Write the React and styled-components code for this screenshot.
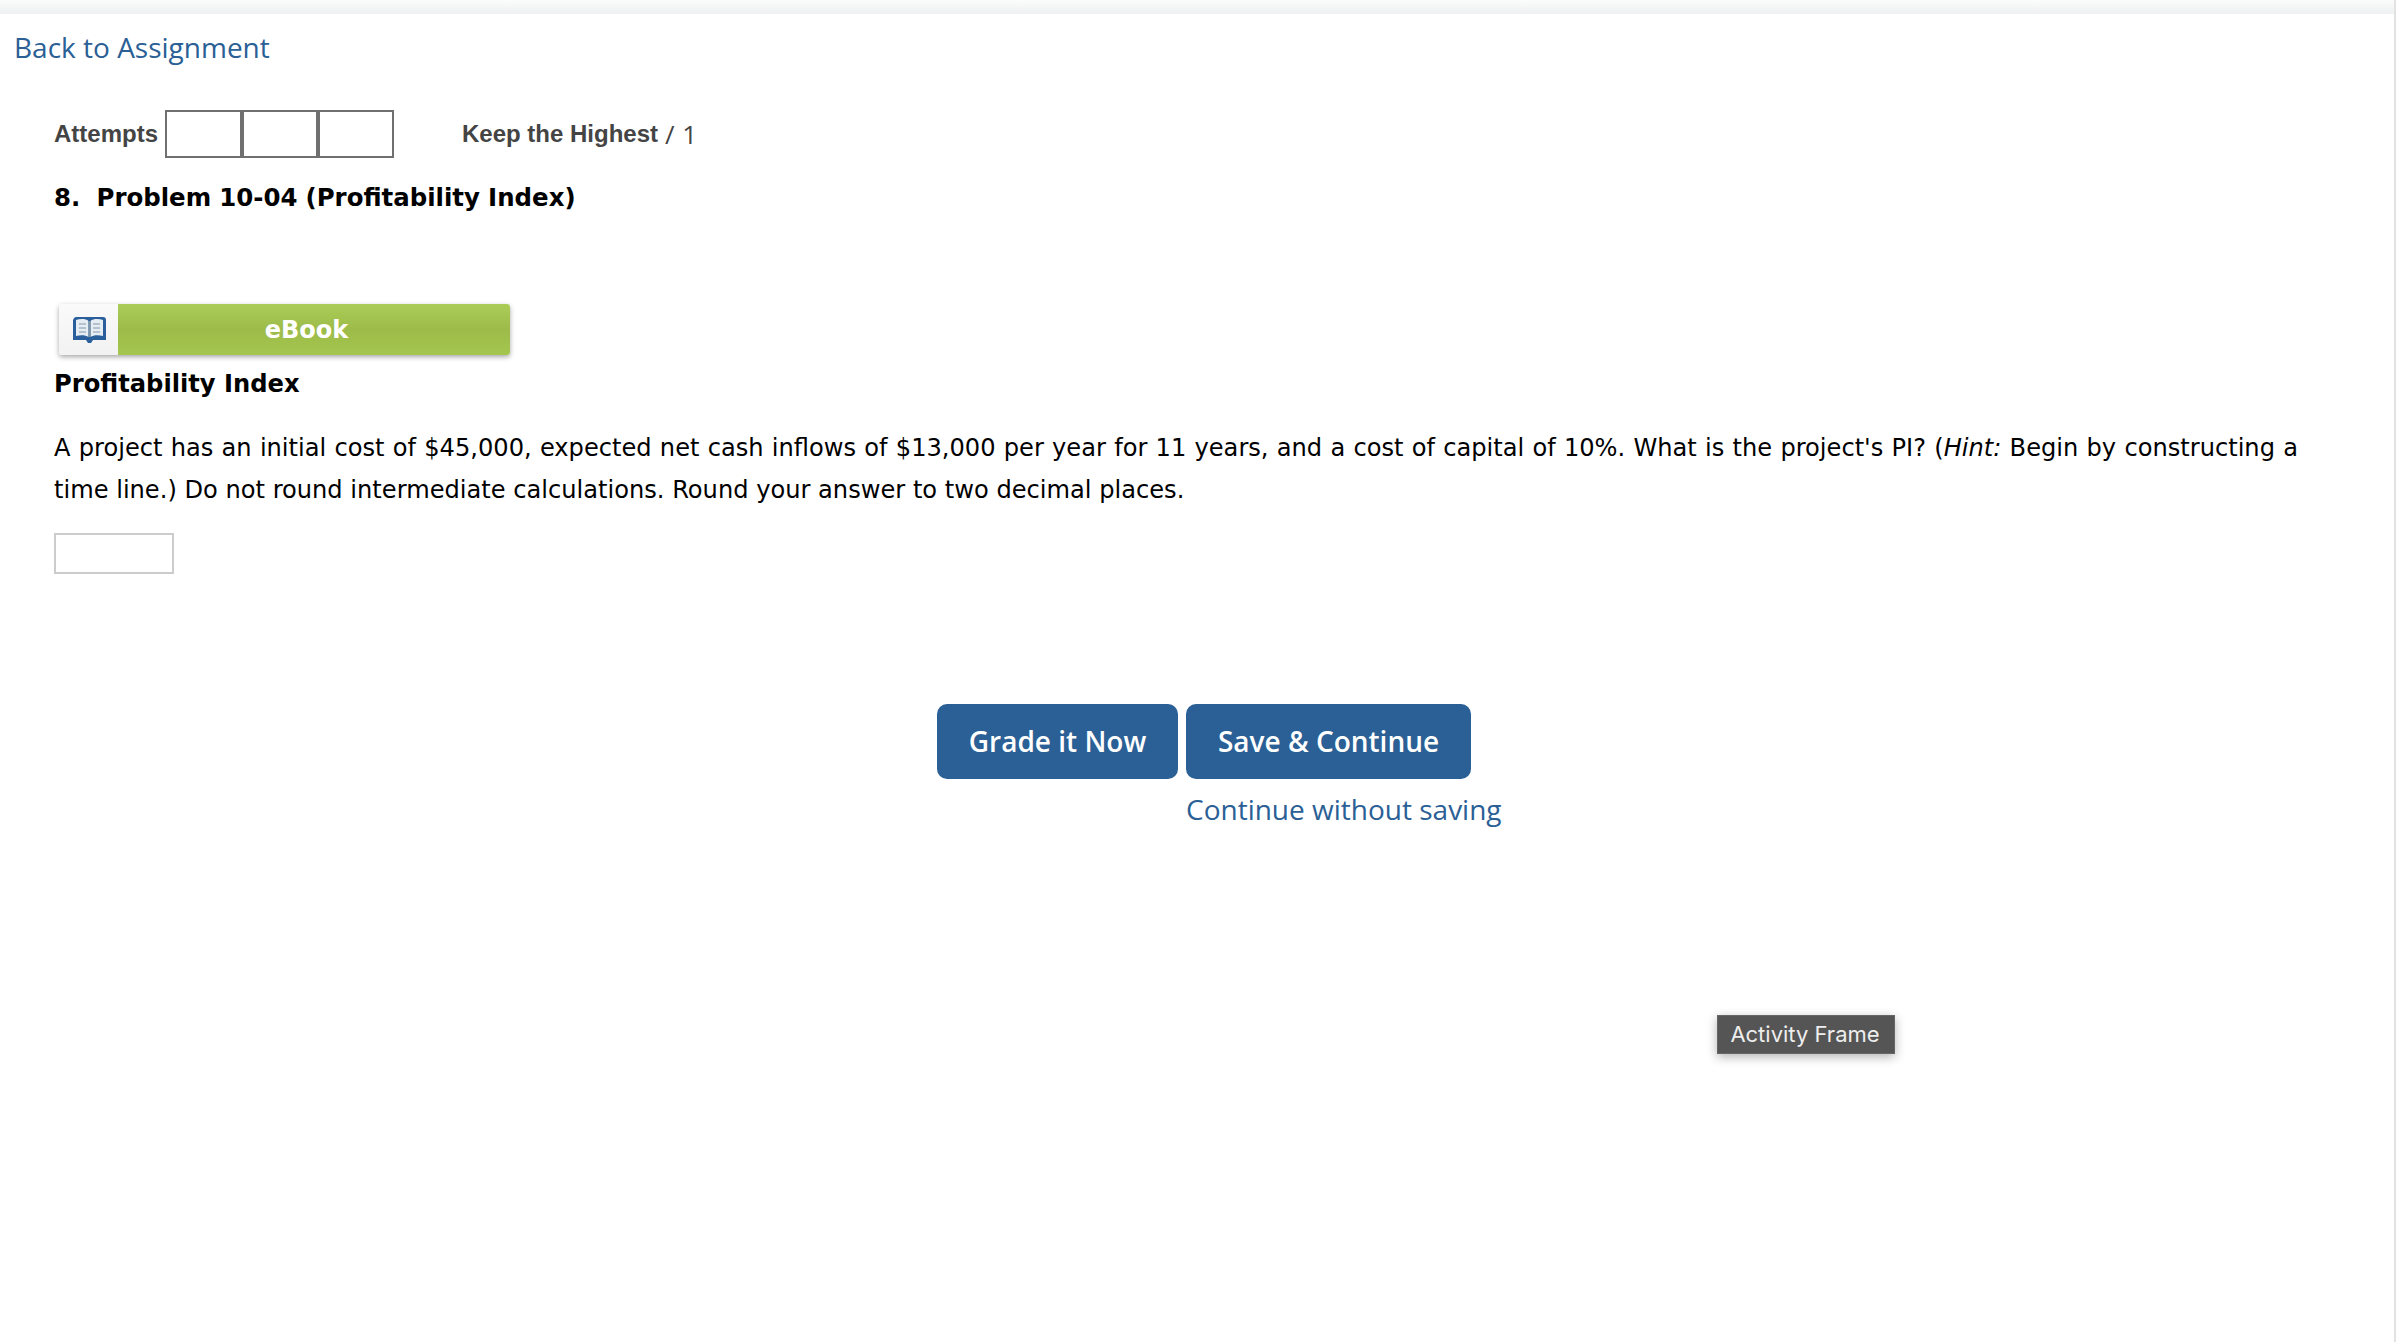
import React from "react";
import styled, { createGlobalStyle } from "styled-components";

const Global = createGlobalStyle`
  html, body { margin: 0; padding: 0; background: #fff; }
  * { box-sizing: border-box; }
`;

const Page = styled.div`
  position: relative;
  height: 1342px;
  overflow: hidden;
  background: #fff;
  border-right: 2px solid #e2e2e2;
`;
const TopBar = styled.div`
  height: 14px;
  background: linear-gradient(#fbfcfc, #eef1f1);
`;
const LinkText = styled.a`
  font-family: "Open Sans", sans-serif;
  font-size: 28px;
  line-height: 38px;
  color: #2a6095;
  text-decoration: none;
  display: block;
`;
const BackRow = styled.div`
  padding: 14px 0 0 14px;
`;
const Content = styled.div`
  padding: 44px 0 0 54px;
  width: 2298px;
`;
const AttemptsRow = styled.div`
  display: flex;
  align-items: center;
  height: 48px;
  font-family: "Liberation Sans", Arial, sans-serif;
  font-size: 24px;
  color: #444;
`;
const AttemptsLabel = styled.b`
  margin-right: 7px;
`;
const Boxes = styled.div`
  display: flex;
  margin-right: 68px;
  border: 2px solid #707070;
`;
const Box = styled.div`
  width: 73px;
  height: 44px;
  & + & { border-left: 4px solid #707070; width: 76px; }
`;
const Score = styled.span`
  font-family: "Open Sans", sans-serif;
  font-size: 26px;
  margin-left: 7px;
  word-spacing: 1px;
`;
const Title = styled.h1`
  margin: 24px 0 0;
  font-family: "DejaVu Sans", Verdana, sans-serif;
  font-size: 24.45px;
  line-height: 32px;
  font-weight: 700;
  color: #000;
  white-space: pre;
  word-spacing: -0.4px;
`;
const EbookButton = styled.div`
  display: flex;
  margin: 90px 0 0 5px;
  width: 451px;
  height: 51px;
  border-radius: 3px;
  box-shadow: 0 2px 5px rgba(0, 0, 0, 0.35);
`;
const EbookIcon = styled.div`
  width: 59px;
  display: flex;
  align-items: center;
  justify-content: center;
  padding-left: 2px;
  background: linear-gradient(#fafafa, #f2f2f2);
  border-radius: 3px 0 0 3px;
`;
const EbookLabel = styled.div`
  flex: 1;
  display: flex;
  align-items: center;
  justify-content: center;
  padding-right: 15px;
  background: linear-gradient(#abcd58, #9dbb49 50%, #a4c64f);
  border-radius: 0 3px 3px 0;
  font-family: "DejaVu Sans", Verdana, sans-serif;
  font-weight: 700;
  font-size: 24px;
  color: #fff;
`;
const Subhead = styled.h2`
  margin: 12px 0 0;
  font-family: "DejaVu Sans", Verdana, sans-serif;
  font-size: 24.2px;
  line-height: 34px;
  font-weight: 700;
  color: #000;
`;
const Paragraph = styled.p`
  margin: 26px 0 0;
  font-family: "DejaVu Sans", Verdana, sans-serif;
  font-size: 24.13px;
  line-height: 42px;
  color: #000;
  text-align: justify;
`;
const Answer = styled.input`
  display: block;
  margin-top: 22px;
  width: 120px;
  height: 41px;
  border: 2px solid #ccc;
  background: #fff;
  padding: 0;
`;
const Actions = styled.div`
  display: grid;
  grid-template-columns: 241px 285px;
  column-gap: 8px;
  padding-left: 937px;
  margin-top: 130px;
`;
const Button = styled.button`
  height: 75px;
  border: 0;
  border-radius: 10px;
  background: #2a6095;
  color: #fff;
  font-family: "Open Sans", sans-serif;
  font-weight: 600;
  font-size: 28px;
  padding: 0 0 2px;
`;
const ContinueCell = styled.div`
  grid-column: 2;
  margin-top: 11px;
  white-space: nowrap;
`;
const Tooltip = styled.div`
  position: absolute;
  left: 1717px;
  top: 1015px;
  width: 178px;
  height: 39px;
  display: flex;
  align-items: center;
  justify-content: center;
  padding: 0 2px 1px 0;
  background: #555;
  border: 1px solid #666;
  color: #eee;
  font-family: "Inter", "Liberation Sans", sans-serif;
  font-size: 22px;
  box-shadow: 0 3px 10px rgba(0, 0, 0, 0.3);
`;
const BookSvg = styled.svg`
  display: block;
  filter: blur(0.5px);
`;

const BookIcon = () => (
  <BookSvg width="33" height="28" viewBox="0 0 33 28" fill="none">
    <path d="M0 4q1-3 3-3h27q3 0 3 3v20H20l-2 3h-3l-2-3H0z" fill="#2a5f9c" />
    <path d="M3 4c4-1.500 10-1.500 12.500 1v16c-3-2-8-2-12.500-1z" fill="#e6edf2" />
    <path d="M30 4c-4-1.500-10-1.500-12.500 1v16c3-2 8-2 12.500-1z" fill="#e6edf2" />
    <path d="M6 8h7M6 12h7M6 16h7M20 8h7M20 12h7M20 16h7" stroke="#a3b4c2" strokeWidth="1.500" />
    <path d="M16.500 5v16" stroke="#7f93a5" strokeWidth="2" />
  </BookSvg>
);

export default function App() {
  return (
    <Page>
      <Global />
      <TopBar />
      <BackRow>
        <LinkText href="#">Back to Assignment</LinkText>
      </BackRow>
      <Content>
        <AttemptsRow>
          <AttemptsLabel>Attempts</AttemptsLabel>
          <Boxes>
            <Box />
            <Box />
            <Box />
          </Boxes>
          <b>Keep the Highest</b>
          <Score>/ 1</Score>
        </AttemptsRow>
        <Title>{"8.  Problem 10-04 (Profitability Index)"}</Title>
        <EbookButton>
          <EbookIcon>
            <BookIcon />
          </EbookIcon>
          <EbookLabel>eBook</EbookLabel>
        </EbookButton>
        <Subhead>Profitability Index</Subhead>
        <Paragraph>
          A project has an initial cost of $45,000, expected net cash inflows of $13,000 per year
          for 11 years, and a cost of capital of 10%. What is the project's PI? (<i>Hint:</i> Begin
          by constructing a time line.) Do not round intermediate calculations. Round your answer
          to two decimal places.
        </Paragraph>
        <Answer aria-label="answer" />
      </Content>
      <Actions>
        <Button>Grade it Now</Button>
        <Button>Save &amp; Continue</Button>
        <ContinueCell>
          <LinkText href="#">Continue without saving</LinkText>
        </ContinueCell>
      </Actions>
      <Tooltip>Activity Frame</Tooltip>
    </Page>
  );
}
